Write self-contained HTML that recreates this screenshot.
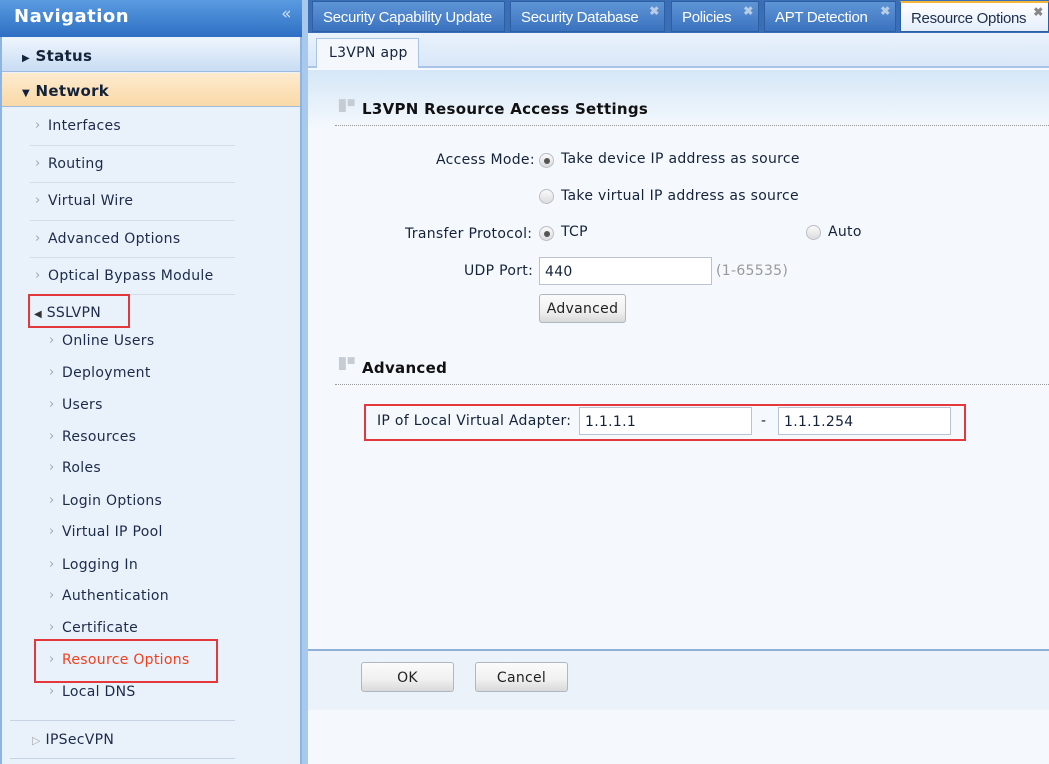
<!DOCTYPE html>
<html><head><meta charset="utf-8"><style>
*{margin:0;padding:0;box-sizing:border-box}
body{width:1049px;height:764px;position:relative;overflow:hidden;background:#f5f9fd;font-family:"DejaVu Sans","Liberation Sans",sans-serif;font-size:14px;color:#15233a;letter-spacing:0.3px}
.a{position:absolute;white-space:nowrap}
#side{left:0;top:0;width:302px;height:764px;background:#e9f1fa;border-right:2px solid #8db5e2;border-left:2px solid #8db5e2}
#navh{left:0;top:0;width:302px;height:37px;background:linear-gradient(#5a9be0,#2e6fc4);color:#fff;font-weight:bold;font-size:18px;padding:6px 14px;letter-spacing:0.5px}
.it{left:48px;color:#1d2b4a}
.sub{left:62px;color:#1d2b4a}
.ar{position:absolute;left:-13px;top:0;color:#9aa;font-size:13px}
.ln{left:30px;width:205px;height:1px;background:#d3dde9}
.tab{top:1px;height:31px;background:linear-gradient(#5e95d6,#3b72bf);border:1px solid #2d5fa3;color:#fff;font-family:"Liberation Sans",sans-serif;font-size:15px;padding:7px 10px;letter-spacing:-0.3px}
.x{position:absolute;top:2px;right:5px;font-size:12px;color:#b8cce6;font-weight:bold}
.rad{width:15px;height:15px;border-radius:50%;border:1px solid #b9bec6;background:linear-gradient(#fafafa,#dcdcdc)}
.rad.on::after{content:"";position:absolute;left:4px;top:4px;width:6px;height:6px;border-radius:50%;background:#555}
.inp{height:28px;background:#fff;border:1px solid #b9c3d4;padding:5px 5px;font-size:14px}
.btn{border:1px solid #aeb7c2;border-radius:3px;background:linear-gradient(#fbfbfb 0,#f0f0f0 60%,#d9d9d9 100%);text-align:center;font-size:14px;color:#222}
.red{border:2px solid #e5383d}
.dots{height:1px;border-top:1px dotted #999}
</style></head><body>
<div class="a" id="side"></div>
<div class="a" id="navh">Navigation<span style="position:absolute;right:10px;top:4px;font-size:17px;font-weight:normal;color:#cfe0f5">«</span></div>
<div class="a" style="left:2px;top:38px;width:298px;height:34px;background:linear-gradient(#eef5fd,#c8dcf3);border-bottom:1px solid #9dbbe0;font-weight:bold;font-size:15px;padding:9px 20px"><span style="font-size:10px">▶</span> Status</div>
<div class="a" style="left:2px;top:73px;width:298px;height:34px;background:linear-gradient(#fdebcf,#f9d9a7);border-bottom:1px solid #9dbbe0;font-weight:bold;font-size:15px;padding:9px 20px"><span style="font-size:10px">▼</span> Network</div>
<div class="a it" style="top:118px"><span class="ar">›</span>Interfaces</div><div class="a ln" style="top:145px"></div>
<div class="a it" style="top:156px"><span class="ar">›</span>Routing</div><div class="a ln" style="top:182px"></div>
<div class="a it" style="top:193px"><span class="ar">›</span>Virtual Wire</div><div class="a ln" style="top:220px"></div>
<div class="a it" style="top:231px"><span class="ar">›</span>Advanced Options</div><div class="a ln" style="top:257px"></div>
<div class="a it" style="top:268px"><span class="ar">›</span>Optical Bypass Module</div><div class="a ln" style="top:294px"></div>
<div class="a red" style="left:28px;top:294px;width:102px;height:34px"></div>
<div class="a it" style="top:305px;left:34px"><span style="font-size:10px;color:#333">◀</span> SSLVPN</div>
<div class="a sub" style="top:333px"><span class="ar">›</span>Online Users</div>
<div class="a sub" style="top:365px"><span class="ar">›</span>Deployment</div>
<div class="a sub" style="top:397px"><span class="ar">›</span>Users</div>
<div class="a sub" style="top:429px"><span class="ar">›</span>Resources</div>
<div class="a sub" style="top:460px"><span class="ar">›</span>Roles</div>
<div class="a sub" style="top:493px"><span class="ar">›</span>Login Options</div>
<div class="a sub" style="top:524px"><span class="ar">›</span>Virtual IP Pool</div>
<div class="a sub" style="top:557px"><span class="ar">›</span>Logging In</div>
<div class="a sub" style="top:588px"><span class="ar">›</span>Authentication</div>
<div class="a sub" style="top:620px"><span class="ar">›</span>Certificate</div>
<div class="a red" style="left:34px;top:639px;width:184px;height:44px"></div>
<div class="a sub" style="top:652px;color:#f0401e"><span class="ar">›</span>Resource Options</div>
<div class="a sub" style="top:684px"><span class="ar">›</span>Local DNS</div>
<div class="a ln" style="top:720px;left:10px;width:225px;background:#c5d3e3"></div>
<div class="a it" style="top:732px;left:32px"><span style="font-size:11px;color:#aaa">▷</span> IPSecVPN</div>
<div class="a ln" style="top:758px;left:10px;width:225px;background:#c5d3e3"></div>

<div class="a" style="left:302px;top:0;width:6px;height:764px;background:#a9c9ec"></div>
<div class="a" style="left:308px;top:0;width:741px;height:34px;background:#3a6fb8"></div>
<div class="a tab" style="left:312px;width:193px">Security Capability Update</div>
<div class="a tab" style="left:510px;width:155px">Security Database<span class="x">✖</span></div>
<div class="a tab" style="left:671px;width:88px">Policies<span class="x">✖</span></div>
<div class="a tab" style="left:764px;width:132px">APT Detection<span class="x">✖</span></div>
<div class="a tab" style="left:900px;width:149px;background:linear-gradient(#fff,#e4eefb);border-top:2px solid #f3b73b;color:#1d3050">Resource Options<span class="x" style="color:#888">✖</span></div>
<div class="a" style="left:308px;top:33px;width:741px;height:35px;background:linear-gradient(#eaf2fc,#d9e7f8);border-bottom:2px solid #a9c4e6"></div>
<div class="a" style="left:316px;top:38px;width:103px;height:30px;background:#f4f8fd;border:1px solid #a9c4e6;border-bottom:none;padding:6px 12px;font-size:14px">L3VPN app</div>
<div class="a" style="left:308px;top:70px;width:741px;height:60px;background:linear-gradient(#d5e7f7,#f5f9fd)"></div>

<div class="a" style="left:338px;top:100px;color:#c6ccd4;font-size:9px;line-height:6px">■■<br>■</div>
<div class="a" style="left:362px;top:100px;font-weight:bold;font-size:15px;color:#111">L3VPN Resource Access Settings</div>
<div class="a dots" style="left:335px;top:125px;width:714px"></div>

<div class="a" style="left:436px;top:152px">Access Mode:</div>
<div class="a rad on" style="left:539px;top:153px"></div>
<div class="a" style="left:561px;top:151px">Take device IP address as source</div>
<div class="a rad" style="left:539px;top:189px"></div>
<div class="a" style="left:561px;top:188px">Take virtual IP address as source</div>
<div class="a" style="left:405px;top:226px">Transfer Protocol:</div>
<div class="a rad on" style="left:539px;top:226px"></div>
<div class="a" style="left:561px;top:224px">TCP</div>
<div class="a rad" style="left:806px;top:225px"></div>
<div class="a" style="left:828px;top:224px">Auto</div>
<div class="a" style="left:464px;top:263px">UDP Port:</div>
<div class="a inp" style="left:539px;top:257px;width:173px;padding-top:6px">440</div>
<div class="a" style="left:716px;top:263px;color:#999">(1-65535)</div>
<div class="a btn" style="left:539px;top:294px;width:87px;height:29px;padding-top:6px">Advanced</div>

<div class="a" style="left:338px;top:358px;color:#c6ccd4;font-size:9px;line-height:6px">■■<br>■</div>
<div class="a" style="left:362px;top:359px;font-weight:bold;font-size:15px;color:#111">Advanced</div>
<div class="a dots" style="left:335px;top:384px;width:714px"></div>
<div class="a red" style="left:364px;top:404px;width:602px;height:37px"></div>
<div class="a" style="left:377px;top:413px">IP of Local Virtual Adapter:</div>
<div class="a inp" style="left:579px;top:407px;width:173px;padding-top:6px">1.1.1.1</div>
<div class="a" style="left:761px;top:413px">-</div>
<div class="a inp" style="left:778px;top:407px;width:173px;padding-top:6px">1.1.1.254</div>

<div class="a" style="left:308px;top:649px;width:741px;height:2px;background:#8fb0d8"></div>
<div class="a" style="left:308px;top:651px;width:741px;height:59px;background:#ebf2fa"></div>
<div class="a btn" style="left:361px;top:662px;width:93px;height:30px;padding-top:7px">OK</div>
<div class="a btn" style="left:475px;top:662px;width:93px;height:30px;padding-top:7px">Cancel</div>
</body></html>
